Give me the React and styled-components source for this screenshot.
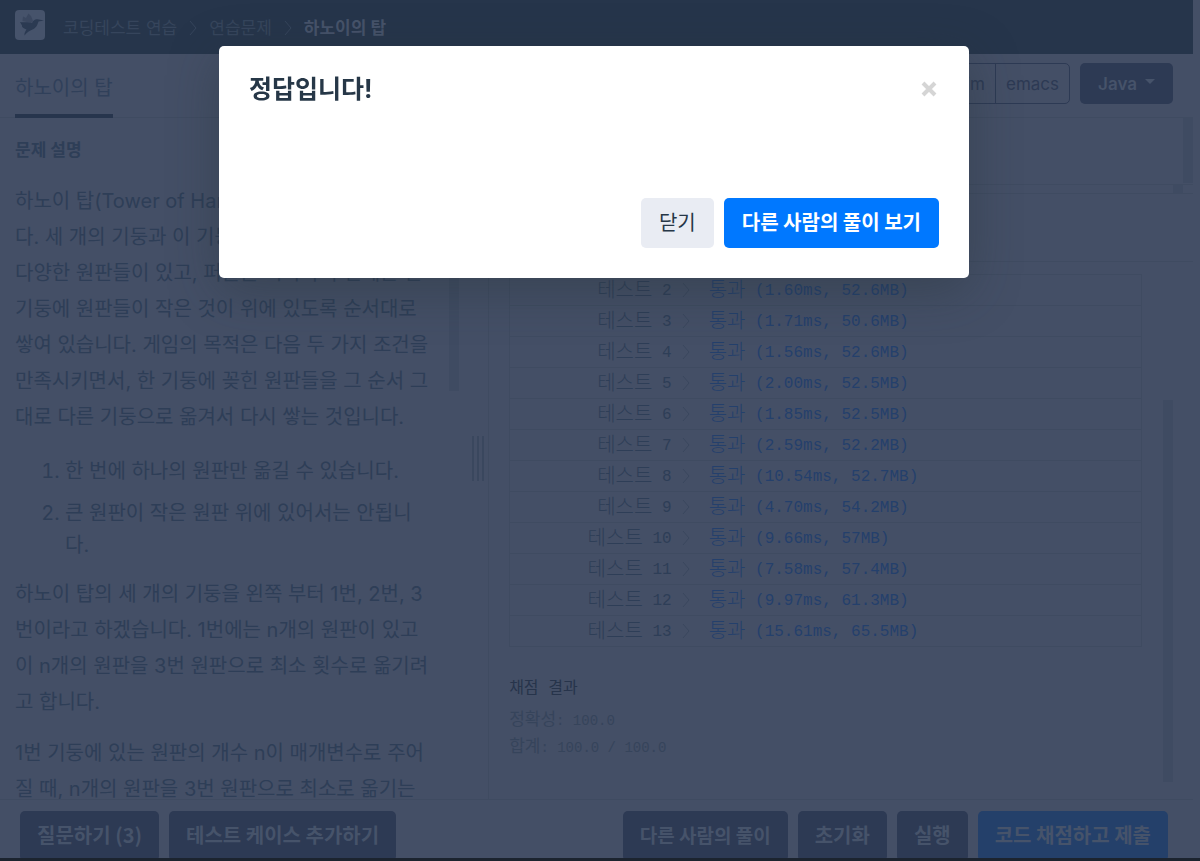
import styled, { createGlobalStyle } from "styled-components";

const results = [
  { no: 2, text: "(1.60ms, 52.6MB)" },
  { no: 3, text: "(1.71ms, 50.6MB)" },
  { no: 4, text: "(1.56ms, 52.6MB)" },
  { no: 5, text: "(2.00ms, 52.5MB)" },
  { no: 6, text: "(1.85ms, 52.5MB)" },
  { no: 7, text: "(2.59ms, 52.2MB)" },
  { no: 8, text: "(10.54ms, 52.7MB)" },
  { no: 9, text: "(4.70ms, 54.2MB)" },
  { no: 10, text: "(9.66ms, 57MB)" },
  { no: 11, text: "(7.58ms, 57.4MB)" },
  { no: 12, text: "(9.97ms, 61.3MB)" },
  { no: 13, text: "(15.61ms, 65.5MB)" },
];

const Chevron = () => (
  <ChevronIcon viewBox="0 0 8 16" aria-hidden="true">
    <path d="M1 1 L7 8 L1 15" fill="none" stroke="currentColor" />
  </ChevronIcon>
);

const App = () => {
  return (
    <>
      <GlobalStyle />
      <Page>
        <Header>
          <Logo viewBox="0 0 30 30" aria-hidden="true">
            <rect width="30" height="30" rx="4" fill="#46536b" />
            <path d="M7.500 11 L8 6.500 L11 8 L13.500 3.500 L16 6 L18 11 L16 13 Z" fill="#3a475f" />
            <path
              d="M5 12 C9 12.500 13 11.500 17 13 C18.500 10 20 9 22.500 9.300 L29 10.400 L23.500 11.500 C22.500 14 22 17 18.500 19 C15 20.500 12 22 9.500 25.500 C9 23 10.500 21 11.500 19.500 C8 18.500 6.500 16.500 7 15.500 Z"
              fill="#2b3a52"
            />
          </Logo>
          <Crumbs aria-label="breadcrumb">
            <a href="#challenges">코딩테스트 연습</a>
            <Chevron />
            <a href="#practice">연습문제</a>
            <Chevron />
            <strong>하노이의 탑</strong>
          </Crumbs>
        </Header>

        <TabBar>
          <Tab href="#lesson">하노이의 탑</Tab>
          <Tools>
            <ModeGroup>
              <ModeButton>vim</ModeButton>
              <ModeButton>emacs</ModeButton>
            </ModeGroup>
            <LanguageButton>
              Java <Caret />
            </LanguageButton>
          </Tools>
        </TabBar>

        <Main>
          <Guide>
            <GuideText>
              <h1>문제 설명</h1>
              <p>
                하노이 탑(Tower of Hanoi)은 퍼즐의 일종입니
                <br />
                다. 세 개의 기둥과 이 기둥에 꽂을 수 있는 크기가
                <br />
                다양한 원판들이 있고, 퍼즐을 시작하기 전에는 한
                <br />
                기둥에 원판들이 작은 것이 위에 있도록 순서대로
                <br />
                쌓여 있습니다. 게임의 목적은 다음 두 가지 조건을
                <br />
                만족시키면서, 한 기둥에 꽂힌 원판들을 그 순서 그
                <br />
                대로 다른 기둥으로 옮겨서 다시 쌓는 것입니다.
              </p>
              <ol>
                <li>한 번에 하나의 원판만 옮길 수 있습니다.</li>
                <li>
                  큰 원판이 작은 원판 위에 있어서는 안됩니
                  <br />
                  다.
                </li>
              </ol>
              <p>
                하노이 탑의 세 개의 기둥을 왼쪽 부터 1번, 2번, 3<br />
                번이라고 하겠습니다. 1번에는 n개의 원판이 있고
                <br />이 n개의 원판을 3번 원판으로 최소 횟수로 옮기려
                <br />고 합니다.
              </p>
              <p>
                1번 기둥에 있는 원판의 개수 n이 매개변수로 주어
                <br />
                질 때, n개의 원판을 3번 원판으로 최소로 옮기는
              </p>
            </GuideText>
            <GuideTrack>
              <Thumb $height="273px" />
            </GuideTrack>
            <Gutter>
              <i />
              <i />
              <i />
            </Gutter>
          </Guide>

          <Work>
            <Editor>
              <Thumb $height="65px" />
            </Editor>
            <EditorScroll>
              <Thumb $height="8px" />
            </EditorScroll>
            <OutputTitle>실행 결과</OutputTitle>
            <Output>
              <OutputBody>
                <ResultTable>
                  <tbody>
                    {results.map((item) => (
                      <tr key={item.no}>
                        <th scope="row">
                          <span>테스트</span> {item.no}
                        </th>
                        <td>
                          <Chevron />
                        </td>
                        <td>
                          <span>통과</span> {item.text}
                        </td>
                      </tr>
                    ))}
                  </tbody>
                </ResultTable>
                <Summary>
                  <h2>채점 결과</h2>
                  <p>
                    <span>정확성</span>: 100.0
                  </p>
                  <p>
                    <span>합계</span>: 100.0 / 100.0
                  </p>
                </Summary>
              </OutputBody>
              <OutputTrack>
                <Thumb $height="382px" />
              </OutputTrack>
            </Output>
          </Work>
        </Main>

        <Footer>
          <Actions>
            <FootButton>질문하기 (3)</FootButton>
            <FootButton>테스트 케이스 추가하기</FootButton>
          </Actions>
          <Actions>
            <FootButton $compact>다른 사람의 풀이</FootButton>
            <FootButton>초기화</FootButton>
            <FootButton>실행</FootButton>
            <FootButton $primary>코드 채점하고 제출</FootButton>
          </Actions>
        </Footer>
      </Page>

      <Backdrop>
        <Modal role="dialog" aria-modal="true" aria-labelledby="modal-title">
          <ModalHeader>
            <h2 id="modal-title">정답입니다!</h2>
            <CloseButton aria-label="닫기">
              <svg viewBox="0 0 16 16" width="16" height="16" aria-hidden="true">
                <path d="M2 2 L14 14 M14 2 L2 14" stroke="#d5d5d5" strokeWidth="4" />
              </svg>
            </CloseButton>
          </ModalHeader>
          <ModalFooter>
            <ModalButton>닫기</ModalButton>
            <ModalButton $primary>다른 사람의 풀이 보기</ModalButton>
          </ModalFooter>
        </Modal>
      </Backdrop>
    </>
  );
};

const line = "#3f4b61";
const thumb = "#3f4b62";
const ink = "#2e3e57";

const GlobalStyle = createGlobalStyle`
* {
  box-sizing: border-box;
}

body {
  margin: 0;
  background: #444f66;
  color: ${ink};
  font-family: Inter, "Noto Sans CJK KR", sans-serif;
  font-size: 20px;
}

button {
  font-family: inherit;
  font-size: inherit;
  cursor: pointer;
}

a {
  color: inherit;
  text-decoration: none;
}
`;

const Page = styled.div`
  display: flex;
  flex-direction: column;
  height: 100vh;
  overflow: hidden;
  padding-right: 7px;
  border-bottom: 3px solid #1c242f;
`;

const ChevronIcon = styled.svg`
  display: block;
  width: 8px;
  height: 16px;
`;

const Header = styled.header`
  display: flex;
  flex: none;
  align-items: center;
  height: 54px;
  padding: 0 15px 4px;
  gap: 18px;
  background: #26354b;
`;

const Logo = styled.svg`
  width: 30px;
  height: 30px;
`;

const Crumbs = styled.nav`
  display: flex;
  align-items: center;
  gap: 12px;
  padding-top: 6px;
  color: #36455c;
  font-size: 17px;
  line-height: 24px;

  strong {
    color: #46536a;
  }
`;

const TabBar = styled.div`
  display: flex;
  flex: none;
  justify-content: space-between;
  height: 64px;
  padding: 0 20px 0 15px;
  border-bottom: 1px solid ${line};
`;

const Tab = styled.a`
  height: 64px;
  border-bottom: 4px solid #27354d;
  color: #30405a;
  line-height: 68px;
`;

const Tools = styled.div`
  display: flex;
  gap: 10px;
  padding-top: 9px;
`;

const ModeGroup = styled.div`
  display: flex;
  height: 41px;
  border: 1px solid #2d3a54;
  border-radius: 5px;
`;

const ModeButton = styled.button`
  padding: 0 10px;
  border: 0;
  background: none;
  color: #2d3a54;
  font-size: 17px;

  & + & {
    border-left: 1px solid #2d3a54;
  }
`;

const LanguageButton = styled.button`
  display: flex;
  align-items: center;
  gap: 8px;
  height: 41px;
  padding: 0 18px;
  border: 0;
  border-radius: 5px;
  background: #2d3a54;
  color: #46536a;
  font-size: 17px;
  font-weight: 600;
`;

const Caret = styled.span`
  margin-bottom: 4px;
  border: 5px solid transparent;
  border-top-color: #46536a;
  border-bottom: 0;
`;

const Main = styled.main`
  display: flex;
  flex: 1;
  min-height: 0;
`;

const Guide = styled.section`
  display: flex;
  flex: 0 0 41%;
  border-right: 1px solid ${line};
`;

const GuideText = styled.article`
  flex: 1;
  min-width: 0;
  padding: 17px 0 0 15px;
  overflow: hidden;
  line-height: 36px;
  white-space: nowrap;

  h1 {
    margin: 0 0 18px;
    font-size: 17px;
    line-height: 30px;
  }

  p {
    margin: 0 0 15px;
  }

  ol {
    margin: 20px 0 15px;
    padding-left: 50px;
    line-height: 32px;
  }

  li + li {
    margin-top: 10px;
  }
`;

const GuideTrack = styled.div`
  width: 10px;
`;

const Thumb = styled.div`
  width: 10px;
  height: ${(props) => props.$height};
  background: ${thumb};
`;

const Gutter = styled.div`
  display: flex;
  align-items: center;
  justify-content: flex-end;
  gap: 3px;
  width: 29px;
  padding-right: 4px;

  i {
    width: 2px;
    height: 45px;
    background: #3a475e;
  }
`;

const Work = styled.section`
  display: flex;
  flex: 1;
  flex-direction: column;
  min-width: 0;
`;

const Editor = styled.div`
  display: flex;
  flex: none;
  justify-content: flex-end;
  height: 66px;
`;

const EditorScroll = styled.div`
  display: flex;
  flex: none;
  justify-content: flex-end;
  height: 10px;
  padding-right: 10px;
  border: solid ${line};
  border-width: 1px 0;
`;

const OutputTitle = styled.div`
  flex: none;
  height: 68px;
  padding-left: 20px;
  border-bottom: 1px solid ${line};
  font-size: 17px;
  line-height: 67px;
`;

const Output = styled.div`
  display: flex;
  flex: 1;
  min-height: 0;
  margin-bottom: 17px;
  padding: 0 20px;
`;

const OutputBody = styled.div`
  display: flex;
  flex: 1;
  flex-direction: column;
  justify-content: flex-end;
  padding-right: 21px;
  overflow: hidden;
  font-family: "Liberation Mono", "Noto Sans CJK KR", monospace;
`;

const ResultTable = styled.table`
  width: 100%;
  border-collapse: collapse;
  border: 1px solid ${line};
  font-size: 16px;
  line-height: 27px;

  tr {
    border-top: 1px solid ${line};
  }

  th,
  td {
    height: 31px;
    padding: 3px 0 0;
    font-weight: 300;
    white-space: nowrap;
  }

  th {
    width: 162px;
    text-align: right;
  }

  td {
    color: #24406c;
  }

  td:nth-child(2) {
    width: 37px;
    padding: 0 0 0 10px;
    color: #3a475e;
  }

  span {
    font-size: 20px;
    line-height: 20px;
    vertical-align: -2px;
  }
`;

const Summary = styled.div`
  padding: 29px 0 20px;
  color: #36445b;
  font-size: 14px;
  line-height: 27px;

  h2 {
    margin: 0 0 5px;
    color: #27344b;
    font-size: 16px;
    font-weight: 400;
  }

  p {
    margin: 0;
  }

  span {
    font-size: 17px;
    line-height: 20px;
  }
`;

const OutputTrack = styled.div`
  display: flex;
  align-items: flex-end;
  width: 10px;
`;

const Footer = styled.footer`
  display: flex;
  flex: none;
  justify-content: space-between;
  height: 59px;
  padding: 11px 25px 0 20px;
  border-top: 1px solid ${line};
`;

const Actions = styled.div`
  display: flex;
  gap: 10px;
`;

const FootButton = styled.button`
  height: 50px;
  padding: 0 17px 3px;
  border: 0;
  border-radius: 5px;
  background: ${(props) => (props.$primary ? "#24406a" : "#2d3a54")};
  color: #46536a;
  font-family: "Noto Sans CJK KR", sans-serif;
  font-size: ${(props) => (props.$compact ? "19px" : "20px")};
  font-weight: 700;
  white-space: nowrap;
`;

const Backdrop = styled.div`
  position: fixed;
  inset: 0;
  padding: 46px 12px 0 0;
`;

const Modal = styled.div`
  display: flex;
  flex-direction: column;
  justify-content: space-between;
  max-width: 750px;
  min-height: 232px;
  margin: 0 auto;
  padding: 25px 30px 30px;
  border-radius: 5px;
  background: #fff;
  box-shadow: 0 12px 50px rgba(38, 50, 56, 0.4);
`;

const ModalHeader = styled.div`
  display: flex;
  align-items: center;
  justify-content: space-between;

  h2 {
    margin: 0;
    color: #263747;
    font-size: 25px;
    font-weight: 700;
    line-height: 36px;
  }
`;

const CloseButton = styled.button`
  display: flex;
  padding: 0 2px;
  border: 0;
  background: none;
`;

const ModalFooter = styled.div`
  display: flex;
  justify-content: flex-end;
  gap: 10px;
`;

const ModalButton = styled.button`
  height: 50px;
  padding: 0 18px 3px;
  border: 0;
  border-radius: 5px;
  background: ${(props) => (props.$primary ? "#0078ff" : "#e9ecf3")};
  color: ${(props) => (props.$primary ? "#fff" : "#263747")};
  font-family: "Noto Sans CJK KR", sans-serif;
  font-weight: ${(props) => (props.$primary ? 700 : 400)};
`;

export default App;
